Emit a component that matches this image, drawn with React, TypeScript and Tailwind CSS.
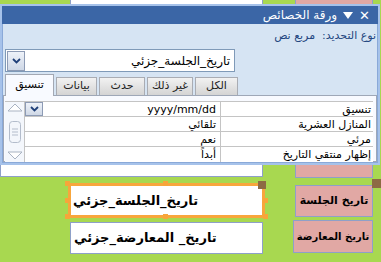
const ar = "font-['DejaVu_Sans','Noto_Sans',sans-serif]";

function Chevron() {
  return (
    <svg width="9" height="6" viewBox="0 0 9 6">
      <path d="M1 1 L4.5 4.5 L8 1" fill="none" stroke="#1f3f78" strokeWidth="1.8" />
    </svg>
  );
}

function DropButton({ className }: { className: string }) {
  return (
    <div
      className={`flex items-center justify-center border border-[#8d9bb5] bg-gradient-to-b from-[#eef2f9] to-[#cfd8e6] ${className}`}
    >
      <Chevron />
    </div>
  );
}

const tabs = [
  { label: "تنسيق", w: "w-[49px]", active: true },
  { label: "بيانات", w: "w-[41px]" },
  { label: "حدث", w: "w-[46px]" },
  { label: "غير ذلك", w: "w-[46px]" },
  { label: "الكل", w: "w-[43px]" },
];

const rows = [
  { name: "تنسيق", value: "yyyy/mm/dd", drop: true },
  { name: "المنازل العشرية", value: "تلقائي" },
  { name: "مرئي", value: "نعم" },
  { name: "إظهار منتقي التاريخ", value: "أبداً" },
];

function Handle({ className }: { className: string }) {
  return <div className={`absolute h-[5px] w-[5px] bg-[#f7a53a] ${className}`} />;
}

function PropertySheet() {
  return (
    <div className="absolute left-0 top-[4px] flex h-[161px] w-[380px] flex-col border-2 border-[#a6c2ea] bg-[#d6e4f3] shadow-[inset_0_0_0_1px_#8aa9d8]">
      <div dir="rtl" className={`flex h-[18px] items-center gap-[6px] bg-[#3b66a6] pr-[8px] text-[12px] text-white ${ar}`}>
        <span className="text-[13px] leading-none">✕</span>
        <svg width="10" height="7" viewBox="0 0 10 7">
          <path d="M0 0 H10 L5 7 Z" fill="#fff" />
        </svg>
        <span className="leading-none">ورقة الخصائص</span>
      </div>

      <div dir="rtl" className={`mt-[5px] pr-[2px] text-[11px] leading-[13px] text-[#23467f] ${ar}`}>
        نوع التحديد:&nbsp; مربع نص
      </div>

      <div className="ml-[3px] mt-[7px] flex h-[23px] w-[230px] items-center border border-[#7f9ab8] bg-white pl-[1px]">
        <DropButton className="h-[20px] w-[18px]" />
        <div dir="rtl" className={`flex-1 pr-[4px] text-[12px] text-black ${ar}`}>تاريخ_الجلسة_جزئي</div>
      </div>

      <div className="ml-[2px] mt-[2px] flex h-[21px] items-end gap-[2px] pl-[1px]">
        {tabs.map((t) =>
          t.active ? (
            <div
              key={t.label}
              className={`relative z-10 -mb-px flex h-[22px] ${t.w} items-center justify-center border border-b-0 border-[#a3a8b3] bg-[#f8faff] text-[11px] text-black ${ar}`}
            >
              {t.label}
            </div>
          ) : (
            <div
              key={t.label}
              className={`flex h-[18px] ${t.w} items-center justify-center border border-b-0 border-[#a9acb3] bg-gradient-to-b from-[#f2f2f2] to-[#d4d4d4] text-[11px] text-[#222] ${ar}`}
            >
              {t.label}
            </div>
          )
        )}
      </div>

      <div className="mx-[1px] flex h-[67px] flex-col border border-[#9ea7b7] bg-[#f8faff] pl-[1px] pr-[3px] pt-[5px]">
        <div className="flex flex-1 border-t border-[#c4c4c4]">
          <div className="flex w-[20px] flex-col items-center justify-between border-r border-[#c4c4c4] bg-[#f4f7fc] pb-[2px] pt-[1px]">
            <svg width="16" height="9" viewBox="0 0 16 9">
              <path d="M1 8 L8 1 L15 8 Z" fill="#fff" stroke="#a9b3c2" />
            </svg>
            <svg width="14" height="22" viewBox="0 0 14 22">
              <rect x="1.5" y="0.5" width="11" height="21" rx="3" fill="#f3f6fb" stroke="#b3bccb" />
              <path d="M4 8 H10 M4 11 H10 M4 14 H10" stroke="#b3bccb" />
            </svg>
            <svg width="16" height="9" viewBox="0 0 16 9">
              <path d="M1 1 L8 8 L15 1 Z" fill="#fff" stroke="#a9b3c2" />
            </svg>
          </div>
          <div className="flex flex-1 flex-col">
            {rows.map((r, i) => (
              <div
                key={r.name}
                className={`flex h-[15px] bg-white ${i < rows.length - 1 ? "border-b border-[#c4c4c4]" : ""}`}
              >
                <div className="flex w-[196px] items-center border-r border-[#c4c4c4]">
                  {r.drop && <DropButton className="h-[14px] w-[18px]" />}
                  <div dir="rtl" className={`flex-1 pr-[4px] text-[11px] leading-none text-black ${ar}`}>
                    {r.value}
                  </div>
                </div>
                <div dir="rtl" className={`flex flex-1 items-center pr-[2px] text-[11px] leading-none text-black ${ar}`}>
                  {r.name}
                </div>
              </div>
            ))}
          </div>
        </div>
      </div>
    </div>
  );
}

function FormBox({ className }: { className: string }) {
  return <div className={`absolute border border-[#8ea0c8] ${className}`} />;
}

export default function App() {
  return (
    <div className="relative h-[262px] w-[381px] overflow-hidden bg-[#a8d850]">
      {/* form design canvas */}
      <FormBox className="left-[70px] top-[-30px] h-[35px] w-[193px] bg-white" />
      <FormBox className="left-[295px] top-[-30px] h-[35px] w-[78px] bg-[#e1a8a4]" />
      <FormBox className="left-[0px] top-[142px] h-[35px] w-[263px] bg-white" />
      <FormBox className="left-[295px] top-[144px] h-[34px] w-[78px] bg-[#e1a8a4]" />

      <div className="absolute left-[68px] top-[183px] flex h-[35px] w-[197px] items-center border-[3px] border-[#f8a63c] bg-white pl-[2px]">
        <span dir="rtl" className={`whitespace-nowrap text-[13px] font-bold text-black ${ar}`}>تاريخ_الجلسة_جزئي</span>
      </div>
      <Handle className="left-[65px] top-[181px]" />
      <Handle className="left-[163px] top-[181px]" />
      <Handle className="left-[65px] top-[198px]" />
      <Handle className="left-[263px] top-[198px]" />
      <Handle className="left-[65px] top-[214px]" />
      <Handle className="left-[163px] top-[214px]" />
      <Handle className="left-[263px] top-[214px]" />
      <div className="absolute left-[258px] top-[181px] h-[8px] w-[8px] bg-[#8d6b44]" />

      <div className="absolute left-[70px] top-[222px] flex h-[32px] w-[193px] items-center border border-[#8ea0c8] bg-white pl-[3px]">
        <span dir="rtl" className={`whitespace-nowrap text-[13px] font-bold text-black ${ar}`}>تاريخ_ المعارضة_جزئي</span>
      </div>

      <div className="absolute left-[295px] top-[185px] flex h-[32px] w-[78px] items-center justify-center border border-[#8ea0c8] bg-[#e1a8a4]">
        <span dir="rtl" className={`whitespace-nowrap text-[11px] font-bold text-black ${ar}`}>تاريخ الجلسة</span>
      </div>
      <div className="absolute left-[372px] top-[179px] h-[9px] w-[9px] bg-[#8d6b44]" />
      <div className="absolute left-[293px] top-[220px] flex h-[33px] w-[80px] items-center justify-center border border-[#8ea0c8] bg-[#e1a8a4]">
        <span dir="rtl" className={`whitespace-nowrap text-[10px] font-bold text-black ${ar}`}>تاريخ المعارضة</span>
      </div>

      <PropertySheet />
    </div>
  );
}
